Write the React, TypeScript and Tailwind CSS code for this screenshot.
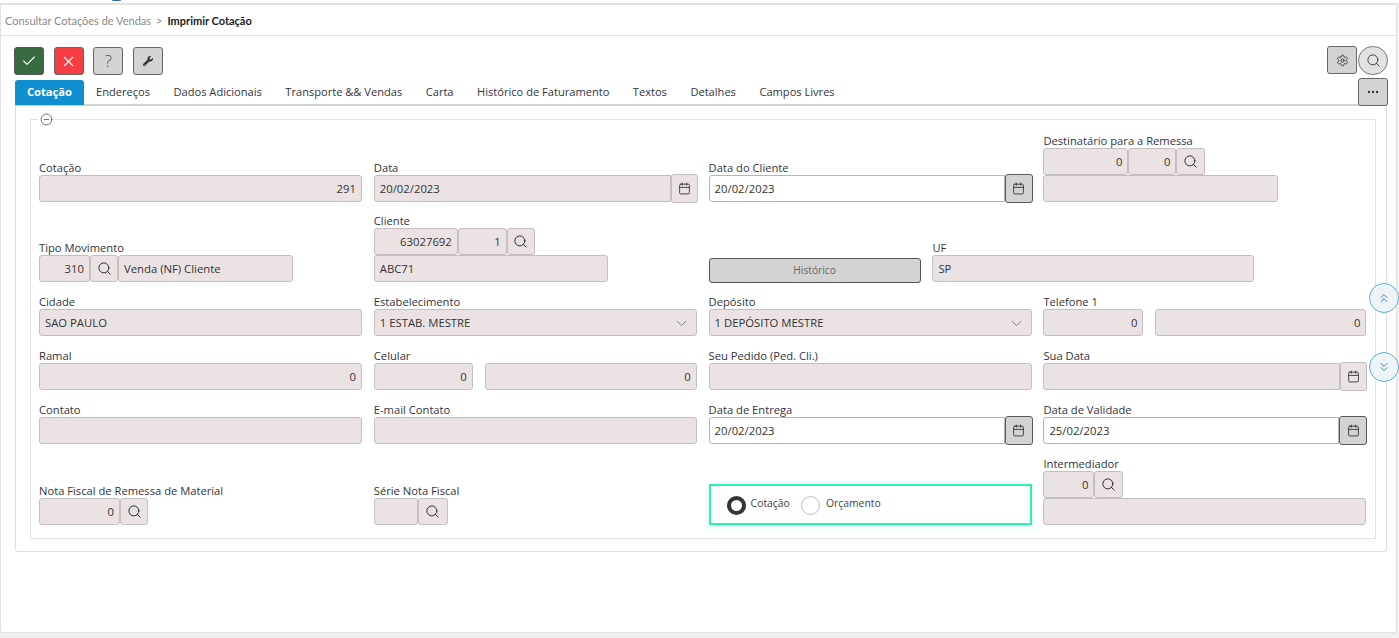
import React from 'react';
import { Check, X, Settings, Search, MoreHorizontal, Calendar, ChevronDown, ChevronsUp, ChevronsDown, CircleMinus } from 'lucide-react';
import { FaWrench } from 'react-icons/fa';

const tabs = ['Endereços', 'Dados Adicionais', 'Transporte && Vendas', 'Carta', 'Histórico de Faturamento', 'Textos', 'Detalhes', 'Campos Livres'];

const Label = ({ children }: { children: React.ReactNode }) => (
  <div className="h-[14px] text-[11.2px] leading-[14px] text-[#33333d] whitespace-nowrap">{children}</div>
);

const Input = ({ value, right, className = '' }: { value?: string; right?: boolean; className?: string }) => (
  <div className={`h-[27px] shrink-0 flex items-center px-[5px] pt-px bg-[#ebe3e3] border border-[#c4bebe] rounded-[3px] text-[11.3px] text-[#333] ${right ? 'justify-end' : ''} ${className}`}>
    {value}
  </div>
);

const WhiteInput = ({ value }: { value: string }) => (
  <div className="h-[27px] flex-1 flex items-center px-[5px] pt-px bg-white border border-[#b5b5b5] rounded-l-[3px] text-[11.3px] text-[#333]">{value}</div>
);

const SearchBtn = ({ className = 'w-[29px]' }: { className?: string }) => (
  <div className={`h-[27px] shrink-0 flex items-center justify-center bg-[#ebe3e3] border border-[#c4bebe] rounded-[3px] ${className}`}>
    <Search className="w-[15px] h-[15px] text-[#2f2f2f]" strokeWidth={1.6} />
  </div>
);

const CalendarBtn = ({ dark }: { dark?: boolean }) => (
  <div className={`h-[29px] -my-px -mr-px shrink-0 flex items-center justify-center rounded-[3px] border ${dark ? 'w-[28px] bg-[#d3d3d3] border-[#5a5a5a]' : 'w-[27px] bg-[#ebe3e3] border-[#c4bebe]'}`}>
    <Calendar className="w-[13px] h-[13px] text-[#2f2f2f]" strokeWidth={1.6} />
  </div>
);

const SelectBox = ({ value }: { value: string }) => (
  <div className="h-[27px] flex items-center justify-between pl-[5px] pr-[6px] pt-px bg-[#ebe3e3] border border-[#c4bebe] rounded-[3px] text-[11.3px] text-[#333]">
    {value}
    <ChevronDown className="w-[17px] h-[17px] text-[#777]" strokeWidth={1.3} />
  </div>
);

const ToolBtn = ({ className, children }: { className: string; children: React.ReactNode }) => (
  <div className={`w-[30px] h-[28px] flex items-center justify-center rounded-[3px] border ${className}`}>{children}</div>
);

const ScrollBtn = ({ children }: { children: React.ReactNode }) => (
  <div className="w-[30px] h-[30px] flex items-center justify-center rounded-full bg-[#eef3f5] border border-[#5ab0d8] text-[#2b83b0]">{children}</div>
);

const rowClass = 'grid grid-cols-[323px_323px_323px_323px] gap-x-[11.8px] items-end';

export default function App() {
  return (
    <div className="relative h-[638px] overflow-hidden bg-[#f0f0f0] font-['Open_Sans','Noto_Sans',sans-serif]">
      <div className="h-[3px] bg-white" />
      <div className="absolute left-[111px] top-[-5px] w-[11px] h-[6px] rounded-full bg-[#2a6fb0]" />
      <div className="h-[630px] mr-[2px] bg-white border border-t-2 border-[#e2e2e2] rounded-b-[3px]">
        <div className="h-[31px] flex items-center pl-[4px] pt-[2px] border-b border-[#e2e2e2] text-[11px] font-['Lato',sans-serif]">
          <span className="text-[#8a8a8a]">Consultar Cotações de Vendas</span>
          <span className="mx-[5px] text-[#8a8a8a]">&gt;</span>
          <span className="font-bold text-[#222]">Imprimir Cotação</span>
        </div>

        <div className="relative h-[39px] flex items-end pl-[13px]">
          <div className="flex gap-[9.67px]">
            <ToolBtn className="bg-[#376b3f] border-[#555]"><Check className="w-[16px] h-[16px] text-white" strokeWidth={1.6} /></ToolBtn>
            <ToolBtn className="bg-[#f63d42] border-[#666]"><X className="w-[17px] h-[17px] text-white" strokeWidth={1.6} /></ToolBtn>
            <ToolBtn className="bg-[#d3d3d3] border-[#666] text-[17px] font-light text-[#555]">?</ToolBtn>
            <ToolBtn className="bg-[#d3d3d3] border-[#666]"><FaWrench className="w-[10px] h-[10px] text-[#333]" /></ToolBtn>
          </div>
          <div className="absolute right-[8px] top-[10px] flex">
            <ToolBtn className="bg-[#d3d3d3] border-[#666]"><Settings className="w-[13px] h-[13px] text-[#333]" strokeWidth={1.6} /></ToolBtn>
            <div className="ml-px w-[30px] h-[29px] flex items-center justify-center rounded-full bg-[#e2e2e2] border border-[#777]">
              <Search className="w-[15px] h-[15px] text-[#444]" strokeWidth={1.6} />
            </div>
          </div>
        </div>

        <div className="relative mt-[5px] ml-[14px] mr-[9px] h-[26px] flex items-stretch border-b-2 border-[#d2d2d2]">
          <div className="w-[69px] -mb-[1px] flex items-center justify-center bg-[#0f8fce] rounded-t-[3px] text-white text-[11.2px] font-bold">Cotação</div>
          <div className="flex items-center ml-[12px] gap-[23.5px] text-[11.1px] text-[#33333d]">
            {tabs.map((t) => (
              <span key={t} className="whitespace-nowrap">{t}</span>
            ))}
          </div>
          <div className="absolute right-[-1px] top-[-2px] w-[30px] h-[28px] flex items-center justify-center rounded-[3px] bg-[#d3d3d3] border border-[#666]">
            <MoreHorizontal className="w-[14px] h-[14px] text-[#333]" />
          </div>
        </div>

        <div className="ml-[14px] mr-[9px] h-[446px] border border-t-0 border-[#dedede] rounded-b-[3px] pl-[14px] pr-[10px] pt-[13px]">
          <div className="relative h-[420px] border border-[#e2e2e2] pl-[8px] pt-[14px]">
            <div className="absolute left-[7px] top-[-7px] bg-white px-[2px]">
              <CircleMinus className="w-[13px] h-[13px] text-[#444]" strokeWidth={1.4} />
            </div>

            <div className={rowClass}>
              <div><Label>Cotação</Label><Input value="291" right /></div>
              <div>
                <Label>Data</Label>
                <div className="flex"><Input value="20/02/2023" className="flex-1 rounded-r-none" /><CalendarBtn /></div>
              </div>
              <div>
                <Label>Data do Cliente</Label>
                <div className="flex"><WhiteInput value="20/02/2023" /><CalendarBtn dark /></div>
              </div>
              <div>
                <Label>Destinatário para a Remessa</Label>
                <div className="flex">
                  <Input value="0" right className="w-[85px]" />
                  <Input value="0" right className="w-[48px]" />
                  <SearchBtn />
                </div>
                <Input className="w-[235px]" />
              </div>
            </div>

            <div className="grid grid-cols-[323px_323px_212px_322px] gap-x-[11.8px] items-end mt-[12px]">
              <div>
                <Label>Tipo Movimento</Label>
                <div className="flex">
                  <Input value="310" right className="w-[51px]" />
                  <SearchBtn className="w-[28px]" />
                  <Input value="Venda (NF) Cliente" className="w-[175px]" />
                </div>
              </div>
              <div>
                <Label>Cliente</Label>
                <div className="flex">
                  <Input value="63027692" right className="w-[84px]" />
                  <Input value="1" right className="w-[49px]" />
                  <SearchBtn className="w-[28px]" />
                </div>
                <Input value="ABC71" className="w-[234px]" />
              </div>
              <div className="h-[25px] flex items-center justify-center bg-[#d3d3d3] border border-[#555] rounded-[3px] text-[10.2px] text-[#666] mb-[-1px]">Histórico</div>
              <div><Label>UF</Label><Input value="SP" /></div>
            </div>

            <div className={`${rowClass} mt-[13px]`}>
              <div><Label>Cidade</Label><Input value="SAO PAULO" /></div>
              <div><Label>Estabelecimento</Label><SelectBox value="1 ESTAB. MESTRE" /></div>
              <div><Label>Depósito</Label><SelectBox value="1 DEPÓSITO MESTRE" /></div>
              <div>
                <Label>Telefone 1</Label>
                <div className="flex gap-[12px]">
                  <Input value="0" right className="w-[100px]" />
                  <Input value="0" right className="flex-1" />
                </div>
              </div>
            </div>

            <div className={`${rowClass} mt-[13px]`}>
              <div><Label>Ramal</Label><Input value="0" right /></div>
              <div>
                <Label>Celular</Label>
                <div className="flex gap-[12px]">
                  <Input value="0" right className="w-[99px]" />
                  <Input value="0" right className="flex-1" />
                </div>
              </div>
              <div><Label>Seu Pedido (Ped. Cli.)</Label><Input /></div>
              <div>
                <Label>Sua Data</Label>
                <div className="flex"><Input className="flex-1 rounded-r-none" /><CalendarBtn /></div>
              </div>
            </div>

            <div className={`${rowClass} mt-[13px]`}>
              <div><Label>Contato</Label><Input /></div>
              <div><Label>E-mail Contato</Label><Input /></div>
              <div>
                <Label>Data de Entrega</Label>
                <div className="flex"><WhiteInput value="20/02/2023" /><CalendarBtn dark /></div>
              </div>
              <div>
                <Label>Data de Validade</Label>
                <div className="flex"><WhiteInput value="25/02/2023" /><CalendarBtn dark /></div>
              </div>
            </div>

            <div className={`${rowClass} mt-[13px]`}>
              <div>
                <Label>Nota Fiscal de Remessa de Material</Label>
                <div className="flex">
                  <Input value="0" right className="w-[81px]" />
                  <SearchBtn className="w-[28px]" />
                </div>
              </div>
              <div>
                <Label>Série Nota Fiscal</Label>
                <div className="flex">
                  <Input className="w-[44px]" />
                  <SearchBtn className="w-[30px]" />
                </div>
              </div>
              <div className="h-[41px] flex items-start pl-[16px] pt-[10px] border-2 border-[#2bf0b4] shadow-[0_2px_6px_rgba(43,240,180,0.25)] text-[10.4px] text-[#444]">
                <span className="w-[19px] h-[19px] rounded-full border-[4px] border-[#333338]" />
                <span className="ml-[5px]">Cotação</span>
                <span className="ml-[11px] w-[19px] h-[19px] rounded-full border border-[#bdbdbd]" />
                <span className="ml-[6px]">Orçamento</span>
              </div>
              <div>
                <Label>Intermediador</Label>
                <div className="flex">
                  <Input value="0" right className="w-[51px]" />
                  <SearchBtn />
                </div>
                <Input />
              </div>
            </div>
          </div>
        </div>
      </div>

      <div className="absolute right-[0px] top-[283px] flex flex-col gap-[39px]">
        <ScrollBtn><ChevronsUp className="w-[14px] h-[14px]" strokeWidth={1.6} /></ScrollBtn>
        <ScrollBtn><ChevronsDown className="w-[14px] h-[14px]" strokeWidth={1.6} /></ScrollBtn>
      </div>
    </div>
  );
}
